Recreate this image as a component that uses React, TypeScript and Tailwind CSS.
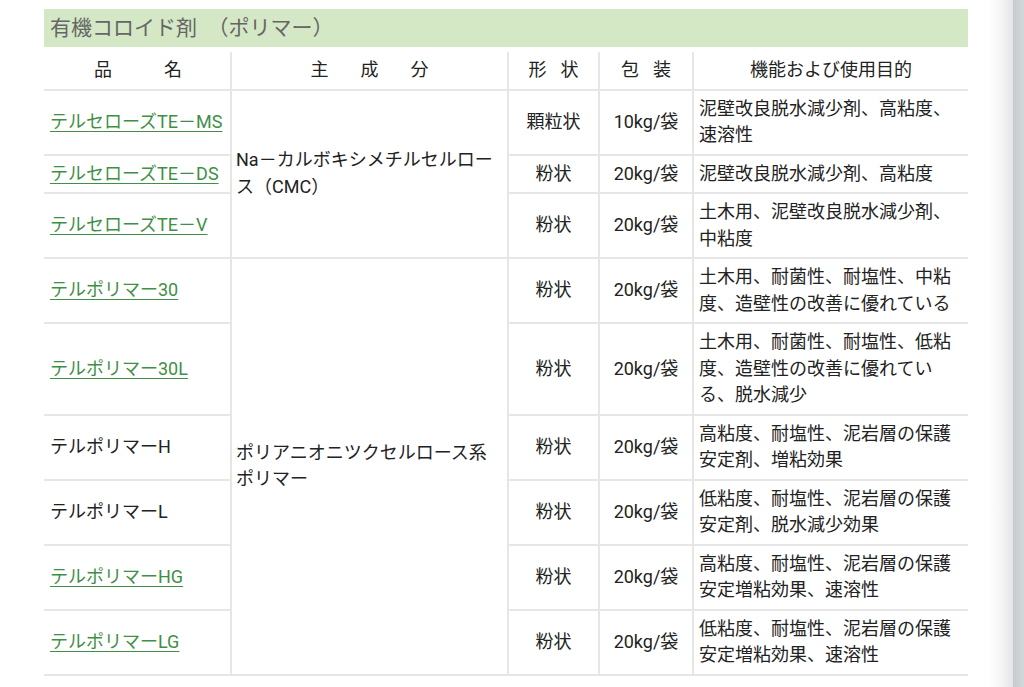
const rows1 = [
  { name: 'テルセローズTE－MS', link: true, shape: '顆粒状', pack: '10kg/袋', use: '泥壁改良脱水減少剤、高粘度、速溶性' },
  { name: 'テルセローズTE－DS', link: true, shape: '粉状', pack: '20kg/袋', use: '泥壁改良脱水減少剤、高粘度' },
  { name: 'テルセローズTE－V', link: true, shape: '粉状', pack: '20kg/袋', use: '土木用、泥壁改良脱水減少剤、中粘度' },
]

const rows2 = [
  { name: 'テルポリマー30', link: true, shape: '粉状', pack: '20kg/袋', use: '土木用、耐菌性、耐塩性、中粘度、造壁性の改善に優れている' },
  { name: 'テルポリマー30L', link: true, shape: '粉状', pack: '20kg/袋', use: '土木用、耐菌性、耐塩性、低粘度、造壁性の改善に優れている、脱水減少' },
  { name: 'テルポリマーH', link: false, shape: '粉状', pack: '20kg/袋', use: '高粘度、耐塩性、泥岩層の保護安定剤、増粘効果' },
  { name: 'テルポリマーL', link: false, shape: '粉状', pack: '20kg/袋', use: '低粘度、耐塩性、泥岩層の保護安定剤、脱水減少効果' },
  { name: 'テルポリマーHG', link: true, shape: '粉状', pack: '20kg/袋', use: '高粘度、耐塩性、泥岩層の保護安定増粘効果、速溶性' },
  { name: 'テルポリマーLG', link: true, shape: '粉状', pack: '20kg/袋', use: '低粘度、耐塩性、泥岩層の保護安定増粘効果、速溶性' },
]

const cell = 'border-b-2 border-[#e6e6e6] py-[5px] align-middle'
const side = 'border-l-2 border-[#e6e6e6]'

type Row = { name: string; link: boolean; shape: string; pack: string; use: string }

function Name({ r }: { r: Row }) {
  return r.link ? (
    <a href="#" className="text-[#3f8f46] underline decoration-[#3f8f46] underline-offset-[3px]">
      {r.name}
    </a>
  ) : (
    <span>{r.name}</span>
  )
}

function Body({ rows, main }: { rows: Row[]; main: string }) {
  return (
    <>
      {rows.map((r, i) => (
        <tr key={r.name}>
          <td className={`${cell} pl-[6px] pr-[4px]`}>
            <Name r={r} />
          </td>
          {i === 0 && (
            <td rowSpan={rows.length} className={`${cell} ${side} pl-[4px] pr-[6px]`}>
              {main}
            </td>
          )}
          <td className={`${cell} ${side} text-center`}>{r.shape}</td>
          <td className={`${cell} ${side} text-center`}>{r.pack}</td>
          <td className={`${cell} ${side} pl-[5px] pr-[6px]`}>{r.use}</td>
        </tr>
      ))}
    </>
  )
}

export default function App() {
  return (
    <div className="flex h-[687px] w-[1024px] overflow-hidden bg-white font-['Roboto','Noto_Sans_CJK_JP',sans-serif] text-[#222]">
      <div className="w-[988px] shrink-0 pl-[44px] pt-[9px]">
        <div className="w-[924px] h-[38px] bg-[#d4e8c5] pl-[6px] text-[21px] leading-[38px] text-[#666]">
          有機コロイド剤　（ポリマー）
        </div>

        <table className="mt-[5px] w-[924px] table-fixed border-separate border-spacing-0 text-[18px] leading-[26.5px]">
          <colgroup>
            <col className="w-[186px]" />
            <col className="w-[277px]" />
            <col className="w-[91px]" />
            <col className="w-[94px]" />
            <col className="w-[276px]" />
          </colgroup>
          <thead>
            <tr>
              <th className={`${cell} font-normal`}>
                <div className="flex justify-center gap-[52px] pl-[2px]">
                  <span>品</span>
                  <span>名</span>
                </div>
              </th>
              <th className={`${cell} ${side} font-normal`}>
                <div className="flex justify-center gap-[32px]">
                  <span>主</span>
                  <span>成</span>
                  <span>分</span>
                </div>
              </th>
              <th className={`${cell} ${side} font-normal`}>
                <div className="flex justify-center gap-[14px]">
                  <span>形</span>
                  <span>状</span>
                </div>
              </th>
              <th className={`${cell} ${side} font-normal`}>
                <div className="flex justify-center gap-[14px]">
                  <span>包</span>
                  <span>装</span>
                </div>
              </th>
              <th className={`${cell} ${side} font-normal`}>機能および使用目的</th>
            </tr>
          </thead>
          <tbody>
            <Body rows={rows1} main="Na－カルボキシメチルセルロース（CMC）" />
            <Body rows={rows2} main="ポリアニオニツクセルロース系ポリマー" />
          </tbody>
        </table>
      </div>
      <div className="w-[25px] shrink-0 bg-gradient-to-r from-white via-[#f6f6f6] to-[#e2e4e5]" />
      <div className="w-[11px] shrink-0 bg-gradient-to-r from-[#c4cacd] to-[#d3d8db]" />
    </div>
  )
}
